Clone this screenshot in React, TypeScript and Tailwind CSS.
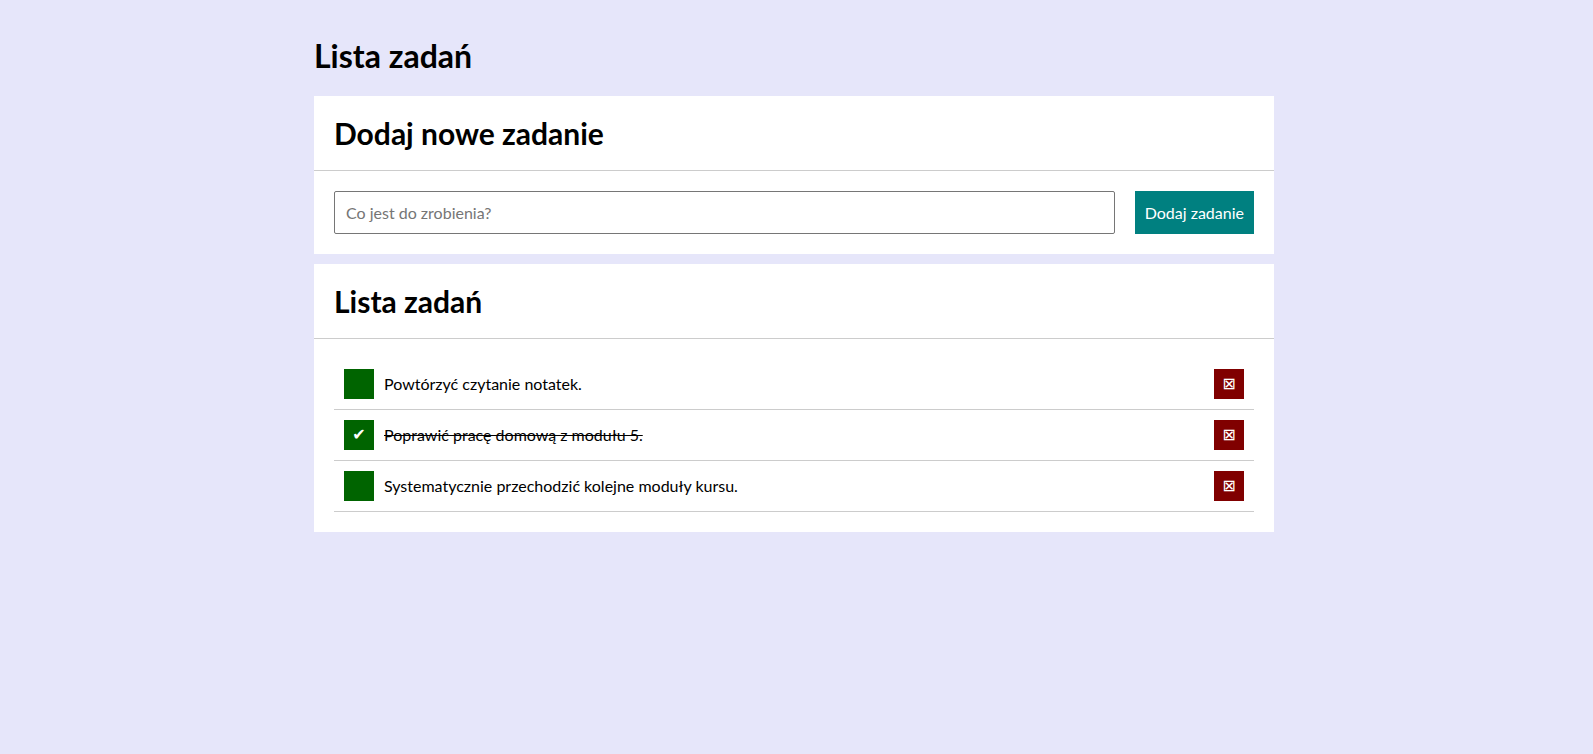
import React, { useState } from "react";

type Task = { id: number; text: string; done: boolean };

export default function App() {
  const [tasks, setTasks] = useState<Task[]>([
    { id: 1, text: "Powtórzyć czytanie notatek.", done: false },
    { id: 2, text: "Poprawić pracę domową z modułu 5.", done: true },
    { id: 3, text: "Systematycznie przechodzić kolejne moduły kursu.", done: false },
  ]);
  const [value, setValue] = useState("");

  return (
    <div
      className="min-h-[754px] w-full bg-[#e6e6fa] text-black"
      style={{ fontFamily: "Lato, 'Noto Sans', sans-serif" }}
    >
      <div className="mx-auto w-[965px] pr-[5px] pt-[37px]">
        <h1 className="text-[32px] font-bold leading-[38px] mb-[21px]">Lista zadań</h1>

        <section className="bg-white">
          <div className="px-[20px] pt-[19px] pb-[19px] border-b border-[#cccccc]">
            <h2 className="text-[30px] font-bold leading-[36px]">Dodaj nowe zadanie</h2>
          </div>
          <div className="flex gap-[20px] p-[20px]">
            <input
              className="flex-1 h-[43px] border border-[#767676] rounded-[2px] px-[11px] text-[16px] placeholder:text-[#757575] outline-none"
              placeholder="Co jest do zrobienia?"
              value={value}
              onChange={(e) => setValue(e.target.value)}
            />
            <button
              className="h-[43px] px-[10px] bg-[#008080] text-white text-[16px]"
              onClick={() => {
                if (!value.trim()) return;
                setTasks([...tasks, { id: Date.now(), text: value, done: false }]);
                setValue("");
              }}
            >
              Dodaj zadanie
            </button>
          </div>
        </section>

        <section className="bg-white mt-[10px]">
          <div className="px-[20px] pt-[19px] pb-[19px] border-b border-[#cccccc]">
            <h2 className="text-[30px] font-bold leading-[36px]">Lista zadań</h2>
          </div>
          <ul className="p-[20px]">
            {tasks.map((t) => (
              <li
                key={t.id}
                className="flex items-center gap-[10px] p-[10px] border-b border-[#cccccc]"
              >
                <button
                  className="w-[30px] h-[30px] bg-[#006400] text-white text-[16px] leading-none flex items-center justify-center shrink-0"
                  style={{ fontFamily: "'DejaVu Sans', sans-serif" }}
                  onClick={() =>
                    setTasks(tasks.map((x) => (x.id === t.id ? { ...x, done: !x.done } : x)))
                  }
                >
                  {t.done ? "✔" : ""}
                </button>
                <span className={"flex-1 text-[16px] " + (t.done ? "line-through" : "")}>
                  {t.text}
                </span>
                <button
                  className="w-[30px] h-[30px] bg-[#800000] text-white text-[16px] leading-none flex items-center justify-center shrink-0"
                  style={{ fontFamily: "'DejaVu Sans', sans-serif" }}
                  onClick={() => setTasks(tasks.filter((x) => x.id !== t.id))}
                >
                  ⊠
                </button>
              </li>
            ))}
          </ul>
        </section>
      </div>
    </div>
  );
}
